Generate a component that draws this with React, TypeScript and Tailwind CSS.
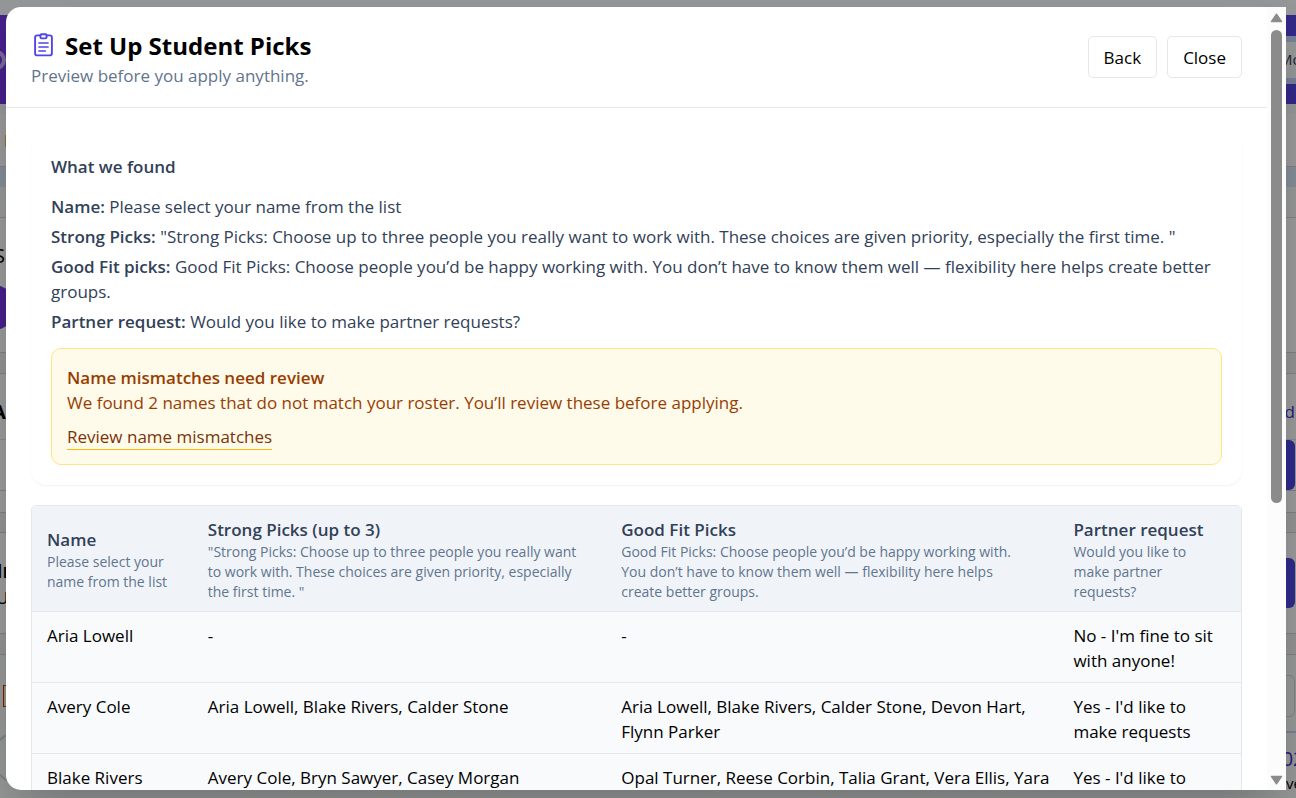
import React from 'react';

const findings = [
  { label: 'Name:', text: 'Please select your name from the list' },
  {
    label: 'Strong Picks:',
    text: '"Strong Picks: Choose up to three people you really want to work with. These choices are given priority, especially the first time. "',
  },
  {
    label: 'Good Fit picks:',
    text: 'Good Fit Picks: Choose people you’d be happy working with. You don’t have to know them well — flexibility here helps create better groups.',
  },
  { label: 'Partner request:', text: 'Would you like to make partner requests?' },
];

const columns = [
  { title: 'Name', hint: 'Please select your name from the list', width: 'w-[13.3%]' },
  {
    title: 'Strong Picks (up to 3)',
    hint: '"Strong Picks: Choose up to three people you really want to work with. These choices are given priority, especially the first time. "',
    width: 'w-[34.2%]',
  },
  {
    title: 'Good Fit Picks',
    hint: 'Good Fit Picks: Choose people you’d be happy working with. You don’t have to know them well — flexibility here helps create better groups.',
    width: 'w-[37.4%]',
  },
  { title: 'Partner request', hint: 'Would you like to make partner requests?', width: '' },
];

const rows = [
  ['Aria Lowell', '-', '-', "No - I'm fine to sit with anyone!"],
  [
    'Avery Cole',
    'Aria Lowell, Blake Rivers, Calder Stone',
    'Aria Lowell, Blake Rivers, Calder Stone, Devon Hart, Flynn Parker',
    "Yes - I'd like to make requests",
  ],
  [
    'Blake Rivers',
    'Avery Cole, Bryn Sawyer, Casey Morgan',
    'Opal Turner, Reese Corbin, Talia Grant, Vera Ellis, Yara Quinn',
    "Yes - I'd like to make requests",
  ],
];

function ClipboardIcon() {
  return (
    <svg className="h-[25px] w-[25px] shrink-0 text-[#4f46e5]" viewBox="0 0 25 25" fill="none" stroke="currentColor" strokeWidth="1.9" strokeLinecap="round" strokeLinejoin="round" aria-hidden="true">
      <path d="M9.4 2.4H6.3a2.2 2.2 0 0 0-2.2 2.2v15.6a2.2 2.2 0 0 0 2.2 2.2h12.4a2.2 2.2 0 0 0 2.2-2.2V4.6a2.2 2.2 0 0 0-2.2-2.2h-3.1" />
      <rect x="9.4" y="1.3" width="6.2" height="4.1" rx="1.2" />
      <path d="M8 10h9M8 14h9M8 18h6.2" strokeWidth="1.7" />
    </svg>
  );
}

function PageBehind() {
  return (
    <div className="absolute inset-0 flex flex-col overflow-hidden bg-slate-50 text-[17px]" aria-hidden="true">
      <div className="mt-[15px] flex h-[89px] shrink-0 items-center justify-between bg-linear-to-r from-[#7535e6] to-[#5443e2]">
        <span className="-ml-3.5 h-5 w-5 rounded-full border-4 border-white/60" />
        <span className="flex h-12 w-16 items-center bg-indigo-200">
          <span className="flex h-9 w-full items-center justify-end overflow-hidden bg-gray-50 text-[15px] text-gray-700">
            <span className="-mr-5">More</span>
          </span>
        </span>
      </div>
      <div className="mt-2.5 flex h-[53px] shrink-0 items-center border-b border-gray-300 bg-white pl-1 text-amber-800">I</div>
      <div className="h-5 shrink-0 bg-blue-100" />
      <div className="h-[31px] shrink-0 border-b border-gray-300 bg-gray-50" />
      <div className="flex h-[135px] shrink-0 flex-col border-b border-gray-300 bg-white pt-6">
        <span className="-ml-1.5 text-xl leading-7 font-medium">S</span>
        <span className="mt-[15px] -ml-10 h-[45px] w-[56px] shrink-0 rounded-full bg-[#7535e6]" />
      </div>
      <div className="h-[21px] shrink-0 border-b border-gray-300 bg-gray-100" />
      <div className="flex h-[66px] shrink-0 items-center justify-between border-b border-gray-200 bg-white pt-2.5">
        <span className="-ml-2 text-xl font-bold">A</span>
        <span className="pr-px text-indigo-700">Add</span>
      </div>
      <div className="flex h-[51px] shrink-0 items-start justify-end border-b border-gray-300 bg-white pr-px">
        <span className="h-[50px] w-24 rounded-md bg-[#4f46e5]" />
      </div>
      <div className="h-[21px] shrink-0 bg-white" />
      <div className="h-[21px] shrink-0 border-y border-gray-300 bg-gray-100" />
      <div className="flex h-[101px] shrink-0 items-center justify-between border-b border-gray-300 bg-white pr-px">
        <span className="-ml-1 flex flex-col">
          <span className="text-xl font-bold">Im</span>
          <span>U</span>
        </span>
        <span className="h-[50px] w-24 rounded-md bg-[#4f46e5]" />
      </div>
      <div className="h-[21px] shrink-0 border-b border-gray-300 bg-gray-100" />
      <div className="flex flex-1 flex-col items-stretch bg-gray-50">
        <div className="mt-5 flex shrink-0 items-center justify-between pr-px pl-[3px]">
          <span className="h-[22px] w-5 border border-orange-700 bg-orange-100" />
          <span className="h-[42px] w-24 rounded-md border border-gray-300" />
        </div>
        <div className="mt-3.5 flex h-[66px] shrink-0 items-start justify-between">
          <span className="-ml-2 h-[53px] w-[53px] rounded-full border-2 border-gray-300" />
          <span className="flex w-[66px] flex-col items-end overflow-hidden border-t-2 border-indigo-200 pt-3">
            <span className="-mr-5 text-xl leading-7 text-indigo-700">2025</span>
            <span className="-mr-3 text-[15px] leading-5">over</span>
          </span>
        </div>
      </div>
      <div className="absolute inset-0 bg-black/40" />
    </div>
  );
}

function ScrollRail() {
  return (
    <div className="flex w-[19px] shrink-0 flex-col items-center bg-[#fcfcfc] pt-1.5 pb-[5px]" aria-hidden="true">
      <svg className="h-[10px] w-[13px] shrink-0" viewBox="0 0 13 10">
        <path d="M6.5 1.2 11.6 8.6H1.4Z" fill="#8b8b8b" stroke="#8b8b8b" strokeWidth="1.4" strokeLinejoin="round" />
      </svg>
      <div className="mt-[7px] flex w-[11px] flex-1 flex-col">
        <div className="h-[63.5%] rounded-full bg-[#8b8b8b]" />
      </div>
      <svg className="h-[10px] w-[13px] shrink-0" viewBox="0 0 13 10">
        <path d="M6.5 8.8 11.6 1.4H1.4Z" fill="#8b8b8b" stroke="#8b8b8b" strokeWidth="1.4" strokeLinejoin="round" />
      </svg>
    </div>
  );
}

export default function App() {
  return (
    <div className="relative flex h-screen overflow-hidden pt-[7px] pr-[10px] pb-2 pl-1.5 font-['Open_Sans','Noto_Sans',sans-serif] text-[17px] leading-[25px] text-black">
      <PageBehind />
      <div role="dialog" aria-modal="true" aria-labelledby="dialog-title" className="relative flex min-w-0 flex-1 overflow-hidden rounded-l-[15px] bg-white shadow-2xl">
        <div className="flex min-w-0 flex-1 flex-col overflow-hidden">
          <header className="flex shrink-0 items-center justify-between border-b border-gray-200 px-[25px] pt-[21px] pb-[19px]">
            <div>
              <h2 id="dialog-title" className="flex items-center gap-[9px] text-[24px] leading-[35px] font-bold">
                <ClipboardIcon />
                Set Up Student Picks
              </h2>
              <p className="text-slate-500">Preview before you apply anything.</p>
            </div>
            <div className="flex gap-2.5 pb-[3px]">
              <button type="button" className="rounded-[5px] border border-gray-200 px-[15px] pt-2 pb-[7px]">Back</button>
              <button type="button" className="rounded-[5px] border border-gray-200 px-[15px] pt-2 pb-[7px]">Close</button>
            </div>
          </header>

          <main className="flex flex-col gap-5 px-[25px] pt-[26px]">
            <section className="rounded-[15px] p-5 text-slate-700 shadow-[0_1px_2px_rgba(0,0,0,0.06)]">
              <h3 className="font-semibold">What we found</h3>
              <div className="mt-[15px] flex flex-col gap-[5px]">
                {findings.map((f) => (
                  <p key={f.label}>
                    <strong className="font-semibold">{f.label}</strong> {f.text}
                  </p>
                ))}
              </div>
              <div className="mt-3.5 rounded-[10px] border border-amber-200 bg-amber-50 px-[15px] pt-4 pb-3.5 text-amber-800">
                <p className="font-semibold">Name mismatches need review</p>
                <p>We found 2 names that do not match your roster. You’ll review these before applying.</p>
                <a href="#mismatches" className="mt-2.5 inline-block border-b border-amber-400 leading-6 text-amber-900">
                  Review name mismatches
                </a>
              </div>
            </section>

            <div className="overflow-hidden rounded-[5px] border border-gray-200">
              <table className="w-full table-fixed border-collapse text-left">
                <thead className="bg-[#f0f4f9]">
                  <tr>
                    {columns.map((c) => (
                      <th key={c.title} scope="col" className={`${c.width} pt-[11px] pr-2 pb-[9px] pl-[15px] align-middle font-normal`}>
                        <div className="font-semibold text-slate-700">{c.title}</div>
                        <div className="pr-[15px] text-[14px] leading-5 text-slate-500">{c.hint}</div>
                      </th>
                    ))}
                  </tr>
                </thead>
                <tbody className="bg-slate-50">
                  {rows.map((r) => (
                    <tr key={r[0]} className="border-t border-gray-200">
                      {r.map((cell, i) => (
                        <td key={i} className="pt-[11px] pr-2 pb-[9px] pl-[15px] align-top">{cell}</td>
                      ))}
                    </tr>
                  ))}
                </tbody>
              </table>
            </div>
          </main>
        </div>
        <ScrollRail />
      </div>
    </div>
  );
}
